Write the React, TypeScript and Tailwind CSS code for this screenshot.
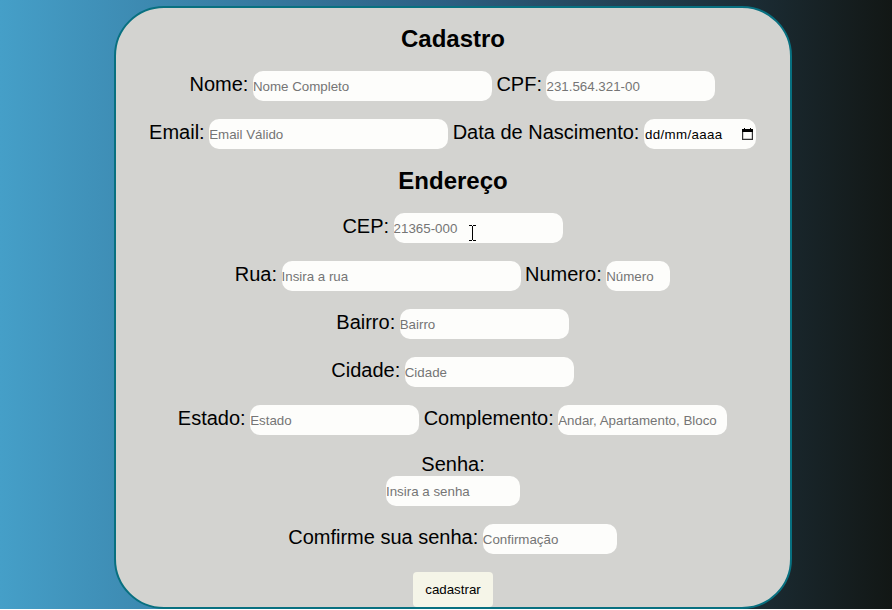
import React from "react";

type FieldProps = { label: string; hint: string; width: string; type?: string };

function Field({ label, hint, width, type = "text" }: FieldProps) {
  return (
    <label className="flex items-start gap-[4.5px]">
      <span className="whitespace-nowrap pt-[2px] leading-[23px]">{label}</span>
      <input
        type={type}
        placeholder={hint}
        className={`${width} h-[30px] rounded-[10px] bg-[#fdfdfb] p-0 text-[13.333px] outline-none placeholder:text-[#757575]`}
      />
    </label>
  );
}

function DateField() {
  return (
    <label className="flex items-start gap-[4.5px]">
      <span className="whitespace-nowrap pt-[2px] leading-[23px]">Data de Nascimento:</span>
      <span className="flex h-[30px] w-[112px] items-center justify-between rounded-[10px] bg-[#fdfdfb] pl-px pr-[3px] text-[13.333px]">
        <span className="pt-px tracking-[0.35px]">dd/mm/aaaa</span>
        <svg width="11" height="12" viewBox="0 0 11 12" className="mb-px" fill="none">
          <path d="M.6 2v9.4h9.8V2" stroke="#333" strokeWidth="1.2" />
          <path d="M0 1h11v3H0zM2 0h1v2H2zM8 0h1v2H8z" fill="#000" />
        </svg>
      </span>
    </label>
  );
}

function Row({ children }: { children: React.ReactNode }) {
  return <div className="mb-[18px] flex h-[30px] justify-center gap-[4.5px] pr-px">{children}</div>;
}

function Title({ children }: { children: React.ReactNode }) {
  return <h2 className="mb-[19px] text-center text-2xl font-bold leading-[27px]">{children}</h2>;
}

export default function App() {
  return (
    <div className="h-[610px] overflow-hidden bg-white font-['Liberation_Sans',Arial,sans-serif] text-[20px] text-black">
      <div className="h-[609px] bg-linear-to-r from-[#459fc8] via-[#2c5f83] via-50% to-[#121715] pl-[114px] pt-[6px]">
        <form className="relative h-[603px] w-[678px] rounded-[50px] border-2 border-[#087080] bg-[#d3d3d0] pt-[17px]">
          <Title>Cadastro</Title>
          <Row>
            <Field label="Nome:" hint="Nome Completo" width="w-[239px]" />
            <Field label="CPF:" hint="231.564.321-00" width="w-[169px]" />
          </Row>
          <Row>
            <Field label="Email:" hint="Email Válido" width="w-[239px]" />
            <DateField />
          </Row>
          <Title>Endereço</Title>
          <Row>
            <Field label="CEP:" hint="21365-000" width="w-[169px]" />
          </Row>
          <Row>
            <Field label="Rua:" hint="Insira a rua" width="w-[239px]" />
            <Field label="Numero:" hint="Número" width="w-[64px]" />
          </Row>
          <Row>
            <Field label="Bairro:" hint="Bairro" width="w-[169px]" />
          </Row>
          <Row>
            <Field label="Cidade:" hint="Cidade" width="w-[169px]" />
          </Row>
          <Row>
            <Field label="Estado:" hint="Estado" width="w-[169px]" />
            <Field label="Complemento:" hint="Andar, Apartamento, Bloco" width="w-[169px]" />
          </Row>
          <label className="mb-[18px] flex flex-col items-center">
            <span className="leading-[23px]">Senha:</span>
            <input
              type="password"
              placeholder="Insira a senha"
              className="h-[30px] w-[134px] rounded-[10px] bg-[#fdfdfb] p-0 text-[13.333px] outline-none placeholder:text-[#757575]"
            />
          </label>
          <Row>
            <Field label="Comfirme sua senha:" hint="Confirmação" width="w-[134px]" type="password" />
          </Row>
          <button type="button" className="mx-auto block h-[35px] w-[80px] rounded-[4px] bg-[#f5f5e8] text-[13.333px]">
            cadastrar
          </button>
          {/* Text cursor hovering over the CEP field */}
          <svg className="absolute left-[353px] top-[217px]" width="8" height="16" viewBox="0 0 8 16">
            <path d="M0 .5h3M4 .5h3M3.5 1v14M0 15.5h3M4 15.5h3" stroke="#000" fill="none" />
          </svg>
        </form>
      </div>
    </div>
  );
}
